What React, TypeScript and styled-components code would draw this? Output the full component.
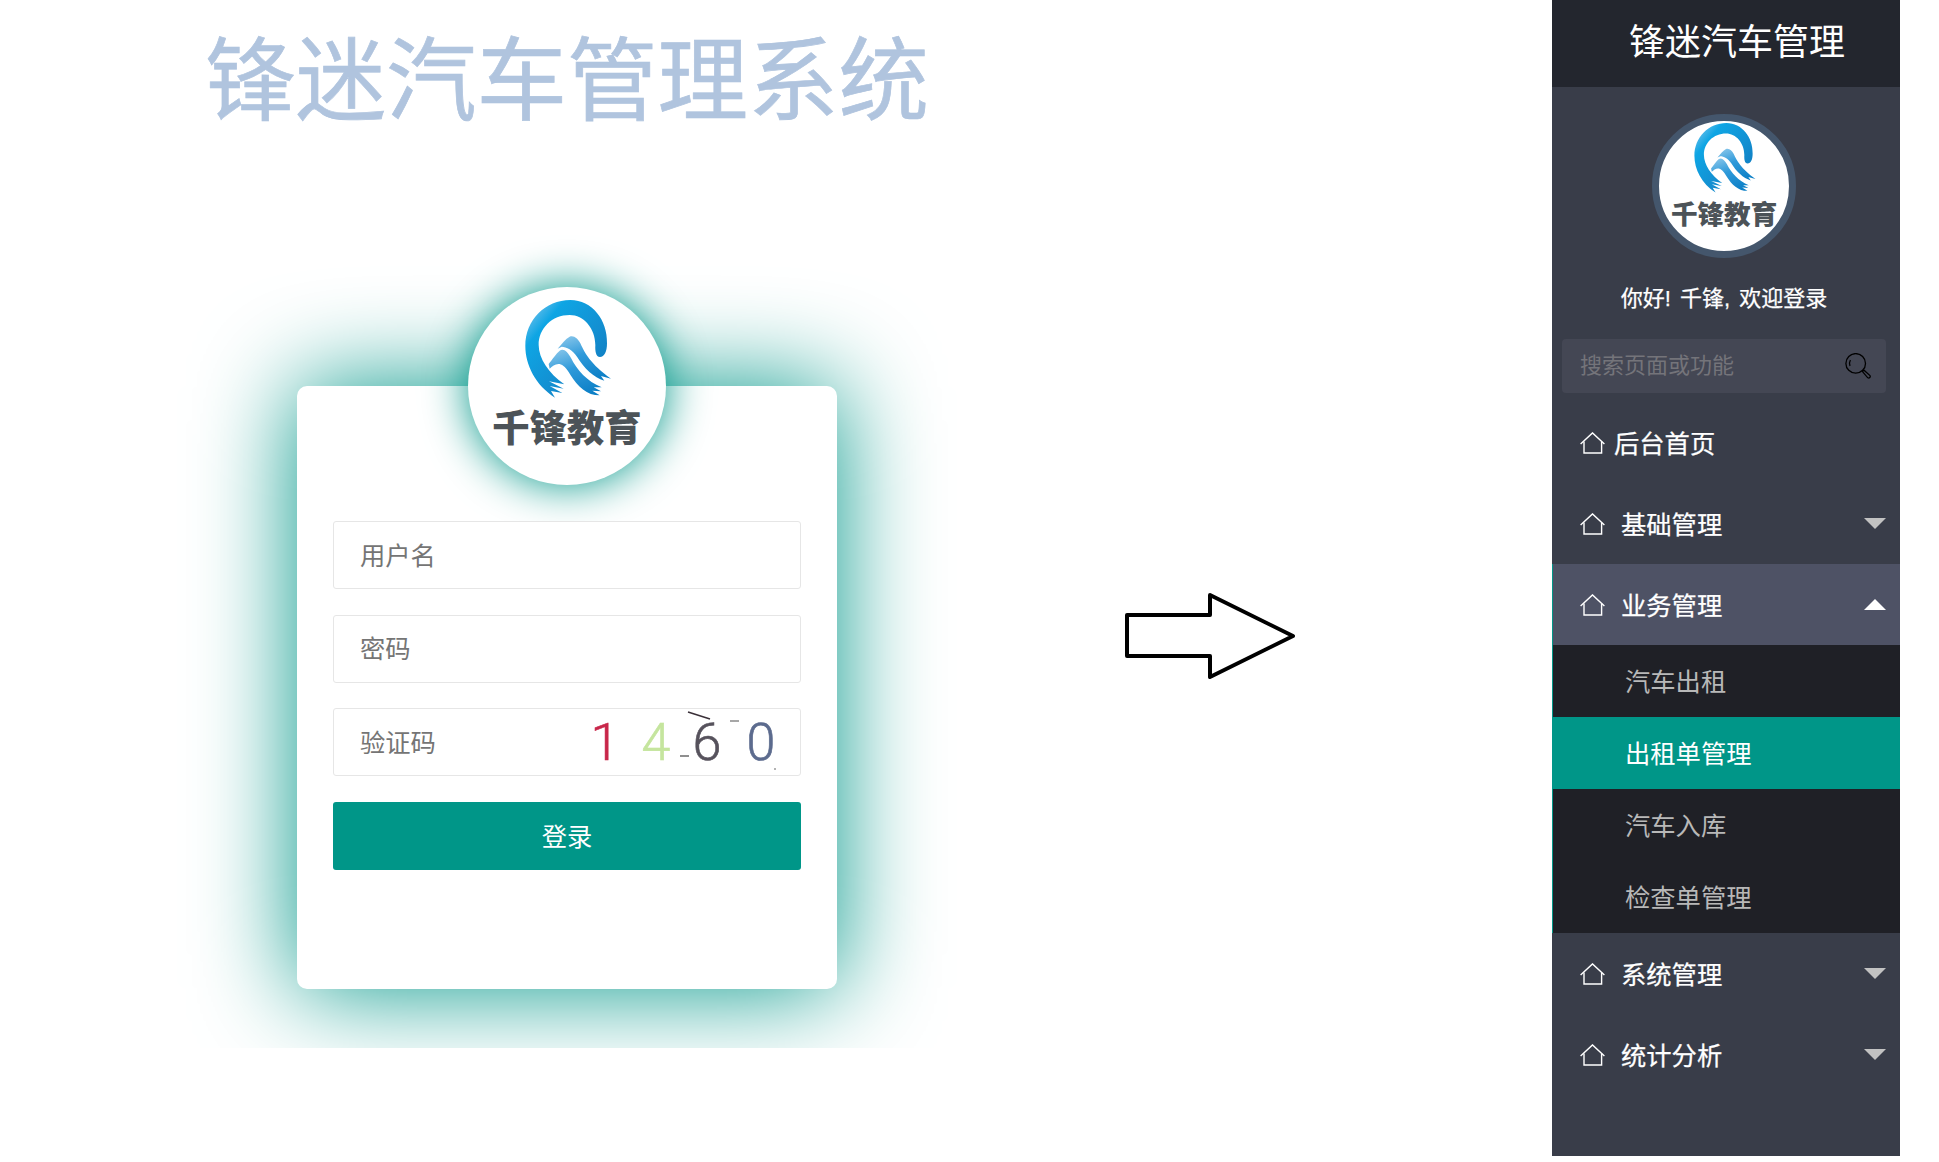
import React from 'react';
import styled, { createGlobalStyle } from 'styled-components';

const FONT = '"Liberation Sans", "Noto Sans CJK SC", sans-serif';
const TEAL = '#009688';

const GlobalStyle = createGlobalStyle`
  html, body {
    margin: 0;
    padding: 0;
    background: #fff;
  }

  * {
    box-sizing: border-box;
  }
`;

const Page = styled.div`
  display: flex;
  width: 1939px;
  height: 1162px;
  overflow: hidden;
  background: #fff;
  font-family: ${FONT};
`;

const LeftPane = styled.div`
  flex: 0 0 1552px;
  display: flex;
  flex-direction: column;
`;

const Title = styled.h1`
  margin: 0;
  height: 150px;
  padding: 17px 0 0 205px;
  font-size: 90.5px;
  line-height: 130px;
  font-weight: 400;
  -webkit-text-stroke: 0.7px #b0c4de;
  color: #b0c4de;
  white-space: nowrap;
`;

const LoginRow = styled.div`
  display: flex;
  align-items: flex-start;
`;

const LoginStage = styled.div`
  flex: 0 0 1060px;
  height: 898px;
  padding: 236px 0 0 297px;
  overflow: hidden;
`;

const LoginCard = styled.form`
  display: flex;
  flex-direction: column;
  width: 540px;
  height: 603px;
  padding: 0 36px;
  background: #fff;
  border-radius: 10px;
  box-shadow: 0 0 100px ${TEAL};
`;

const LoginLogo = styled.div`
  flex: none;
  width: 198px;
  height: 198px;
  margin: -99px auto 36px;
  border-radius: 50%;
  overflow: hidden;
  background: #fff;
  box-shadow: 0 0 45px ${TEAL};
`;

const FieldList = styled.div`
  display: flex;
  flex-direction: column;
  gap: 25.7px;
`;

const Field = styled.label`
  display: flex;
  align-items: center;
  height: 68px;
  padding: 0 20px 0 26px;
  background: #fff;
  border: 1px solid #e6e6e6;
  border-radius: 3px;
`;

const FieldInput = styled.input`
  flex: 1;
  min-width: 0;
  width: 0;
  padding: 2px 0 0;
  border: 0;
  outline: 0;
  background: transparent;
  font-family: ${FONT};
  font-size: 25.3px;
  color: #333;

  &::placeholder {
    color: #757575;
    opacity: 1;
  }
`;

const SubmitButton = styled.button`
  height: 68px;
  padding: 0 0 2px;
  border: 0;
  border-radius: 3px;
  background: ${TEAL};
  color: #fff;
  font-family: ${FONT};
  font-size: 25.3px;
`;

const ArrowSlot = styled.div`
  flex: none;
  margin: 441px 0 0 64px;
  line-height: 0;
`;

const Sidebar = styled.aside`
  flex: 0 0 348px;
  min-width: 0;
  display: flex;
  flex-direction: column;
  height: 1156px;
  background: #393d49;
`;

const SidebarHeader = styled.div`
  height: 87px;
  padding-left: 77px;
  background: #23262e;
  color: #fff;
  font-size: 36px;
  line-height: 86px;
  white-space: nowrap;
`;

const Profile = styled.div`
  display: flex;
  flex-direction: column;
  align-items: center;
  padding: 27px 4px 0 0;
`;

const Avatar = styled.div`
  width: 144px;
  height: 144px;
  border: 7px solid #44566c;
  border-radius: 50%;
  overflow: hidden;
  background: #fff;
`;

const Greeting = styled.div`
  margin-top: 26px;
  font-size: 22px;
  -webkit-text-stroke: 0.25px #fff;
  line-height: 30px;
  color: #fff;
  word-spacing: 3px;
  white-space: nowrap;
`;

const SearchBox = styled.label`
  display: flex;
  align-items: center;
  height: 54px;
  margin: 25px 14px 9px 10px;
  padding: 0 15px 0 18px;
  background: #444754;
  border-radius: 4px;
`;

const SearchInput = styled.input`
  flex: 1;
  min-width: 0;
  width: 0;
  padding: 0;
  border: 0;
  outline: 0;
  background: transparent;
  font-family: ${FONT};
  font-size: 22px;
  color: #fff;

  &::placeholder {
    color: #74747a;
    opacity: 1;
  }
`;

const NavRow = styled.div<{ $open?: boolean; $tight?: boolean }>`
  display: flex;
  align-items: center;
  height: 81px;
  padding: 0 14px 0 ${({ $open }) => ($open ? '27px' : '28px')};
  background: ${({ $open }) => ($open ? '#4e5265' : 'transparent')};
  border-left: ${({ $open }) => ($open ? `1px solid ${TEAL}` : '0')};
  color: #fff;
  font-size: 25.3px;
  -webkit-text-stroke: 0.25px #fff;

  & > span {
    flex: 1;
    margin-left: ${({ $tight }) => ($tight ? '9px' : '16px')};
    padding-bottom: 2px;
    white-space: nowrap;
  }
`;

const SubMenu = styled.div`
  display: flex;
  flex-direction: column;
  background: #1f2026;
  border-left: 1px solid ${TEAL};
`;

const SubItem = styled.div<{ $active?: boolean }>`
  height: 72px;
  margin-left: ${({ $active }) => ($active ? '-1px' : '0')};
  padding-left: ${({ $active }) => ($active ? '73px' : '72px')};
  background: ${({ $active }) => ($active ? TEAL : 'transparent')};
  color: ${({ $active }) => ($active ? '#fff' : '#b8b8b8')};
  font-size: 25.3px;
  line-height: 74px;
  white-space: nowrap;
`;

const Caret = styled.i<{ $up?: boolean }>`
  flex: none;
  width: 0;
  height: 0;
  border-left: 11px solid transparent;
  border-right: 11px solid transparent;
  border-top: ${({ $up }) => ($up ? '0' : '11px solid #c2c2c2')};
  border-bottom: ${({ $up }) => ($up ? '11px solid #fff' : '0')};
`;

const QianfengLogo: React.FC<{ viewBox: string; id: string }> = ({ viewBox, id }) => (
  <svg width="100%" height="100%" viewBox={viewBox} style={{ display: 'block' }}>
    <defs>
      <linearGradient id={`${id}-ring`} x1="0.1" y1="0.1" x2="0.9" y2="0.9">
        <stop offset="0" stopColor="#62bdea" />
        <stop offset="0.18" stopColor="#0ea5e4" />
        <stop offset="0.6" stopColor="#1390d2" />
        <stop offset="1" stopColor="#0f78bd" />
      </linearGradient>
      <linearGradient id={`${id}-peak`} x1="0.3" y1="0" x2="0.7" y2="1">
        <stop offset="0" stopColor="#7cc0e8" />
        <stop offset="0.4" stopColor="#2f9ada" />
        <stop offset="1" stopColor="#0c7fc6" />
      </linearGradient>
    </defs>
    <g transform="translate(7 0)">
      <path
        fill={`url(#${id}-ring)`}
        d="M224 323 C165 285 135 225 135 168 C135 90 195 30 270 30 C335 30 382 90 380 160 C380 185 372 201 359 201 C346 201 344 182 345 165 C345 115 310 75 268 75 C215 75 175 115 175 165 C175 205 205 250 252 283 L206 274 L250 296 L208 288 L246 309 L212 303 Z"
      />
      <path
        fill={`url(#${id}-peak)`}
        d="M232 176 C244 162 256 146 268 140 C282 136 292 146 300 160 C314 190 330 222 392 266 L362 258 L372 272 C340 262 312 236 290 200 C278 180 258 170 244 170 Z"
      />
      <path
        fill={`url(#${id}-peak)`}
        d="M205 222 C216 208 228 190 238 182 C250 174 262 186 272 204 C290 240 320 274 364 292 L340 292 L362 304 L336 302 L358 316 C320 316 292 290 270 254 C258 234 248 224 238 222 C226 220 216 228 208 236 Z"
      />
    </g>
    <text
      x="267"
      y="455"
      textAnchor="middle"
      fontFamily="'Noto Sans CJK SC', sans-serif"
      fontWeight="900"
      fontSize="112"
      fill="#4c5358"
    >
      千锋教育
    </text>
  </svg>
);

const CaptchaImage = () => (
  <svg width="190" height="66" viewBox="0 0 190 66" style={{ flex: 'none' }}>
    <g fontFamily="Roboto, sans-serif" fontWeight="300" fontSize="52" textAnchor="middle" strokeWidth="0.6">
      <text x="15" y="51" fill="#c8264a" stroke="#c8264a">1</text>
      <text x="66" y="51" fill="#c5e59e" stroke="#c5e59e">4</text>
      <text x="117" y="51" fill="#56525c" stroke="#56525c">6</text>
      <text x="171" y="51" fill="#5c6b8e" stroke="#5c6b8e">0</text>
    </g>
    <path d="M98 3 L120 10" stroke="#3a3038" strokeWidth="1.5" fill="none" />
    <path d="M90 47 L99 47" stroke="#6a6a6a" strokeWidth="1.5" fill="none" />
    <path d="M140 12 L149 12" stroke="#8a8a8a" strokeWidth="1.5" fill="none" />
    <circle cx="185" cy="60" r="1" fill="#9a9a9a" />
  </svg>
);

const ArrowIcon = () => (
  <svg width="174" height="90" viewBox="0 0 174 90" style={{ display: 'block' }}>
    <path
      d="M3 24 H86 V4 L169 45 L86 86 V65 H3 Z"
      fill="#fff"
      stroke="#000"
      strokeWidth="4"
      strokeLinejoin="round"
    />
  </svg>
);

const HomeIcon = () => (
  <svg width="25" height="22" viewBox="0 0 25 22" fill="none" stroke="#fff" strokeWidth="1.4" style={{ flex: 'none' }}>
    <path d="M0.6 12 L12.5 0.9 L24.4 12" />
    <path d="M4 9.5 V21 H21.6 V9.5" />
  </svg>
);

const SearchIcon = () => (
  <svg width="26" height="26" viewBox="0 0 26 26" fill="none" stroke="#000" strokeWidth="1.3" style={{ flex: 'none' }}>
    <circle cx="10.7" cy="10.4" r="9.8" />
    <path d="M5 13 A7 7 0 0 1 5.4 7" />
    <path d="M17.5 18.6 L19 17.2 L25 22.6 A1.6 1.6 0 0 1 22.8 24.8 Z" />
  </svg>
);

type NavItem = {
  label: string;
  caret?: 'up' | 'down';
  children?: { label: string; active?: boolean }[];
};

const NAV_ITEMS: NavItem[] = [
  { label: '后台首页' },
  { label: '基础管理', caret: 'down' },
  {
    label: '业务管理',
    caret: 'up',
    children: [
      { label: '汽车出租' },
      { label: '出租单管理', active: true },
      { label: '汽车入库' },
      { label: '检查单管理' },
    ],
  },
  { label: '系统管理', caret: 'down' },
  { label: '统计分析', caret: 'down' },
];

export default function App() {
  return (
    <Page>
      <GlobalStyle />
      <LeftPane>
        <Title>锋迷汽车管理系统</Title>
        <LoginRow>
          <LoginStage>
            <LoginCard>
              <LoginLogo>
                <QianfengLogo id="login" viewBox="-30 -9 594 594" />
              </LoginLogo>
              <FieldList>
                <Field>
                  <FieldInput placeholder="用户名" />
                </Field>
                <Field>
                  <FieldInput placeholder="密码" />
                </Field>
                <Field>
                  <FieldInput placeholder="验证码" />
                  <CaptchaImage />
                </Field>
                <SubmitButton type="button">登录</SubmitButton>
              </FieldList>
            </LoginCard>
          </LoginStage>
          <ArrowSlot>
            <ArrowIcon />
          </ArrowSlot>
        </LoginRow>
      </LeftPane>
      <Sidebar>
        <SidebarHeader>锋迷汽车管理</SidebarHeader>
        <Profile>
          <Avatar>
            <QianfengLogo id="avatar" viewBox="-7 22 547 547" />
          </Avatar>
          <Greeting>你好! 千锋, 欢迎登录</Greeting>
        </Profile>
        <SearchBox>
          <SearchInput placeholder="搜索页面或功能" />
          <SearchIcon />
        </SearchBox>
        <nav>
          {NAV_ITEMS.map((item) => (
            <div key={item.label}>
              <NavRow $open={item.caret === 'up'} $tight={!item.caret}>
                <HomeIcon />
                <span>{item.label}</span>
                {item.caret && <Caret $up={item.caret === 'up'} />}
              </NavRow>
              {item.children && (
                <SubMenu>
                  {item.children.map((child) => (
                    <SubItem key={child.label} $active={child.active}>
                      {child.label}
                    </SubItem>
                  ))}
                </SubMenu>
              )}
            </div>
          ))}
        </nav>
      </Sidebar>
    </Page>
  );
}
